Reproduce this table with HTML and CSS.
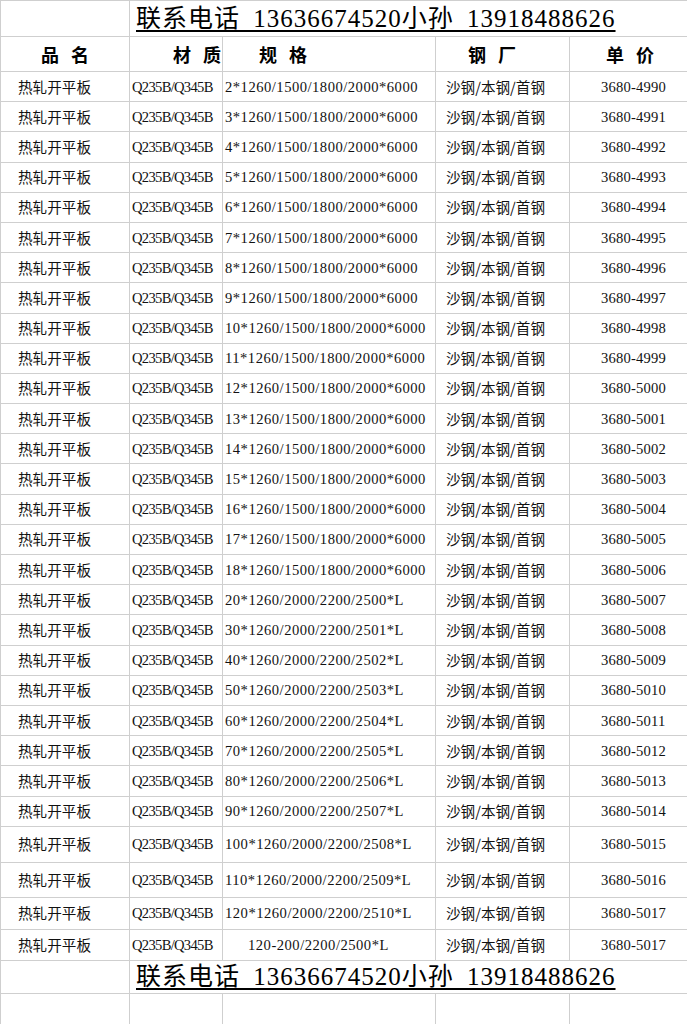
FILE: index.html
```html
<!DOCTYPE html>
<html lang="zh-CN">
<head>
<meta charset="utf-8">
<title>热轧开平板报价</title>
<link rel="stylesheet" href="styles.css">
</head>
<body>
<table class="sheet">
  <colgroup>
    <col class="c-name"><col class="c-mat"><col class="c-spec"><col class="c-mill"><col class="c-price">
  </colgroup>
  <tr class="r-title">
    <td></td>
    <td colspan="4" class="title"><span class="tt">联系电话 13636674520小孙 13918488626</span></td>
  </tr>
  <tr class="r-head">
    <th class="h-name">品 名</th>
    <th class="h-mat">材 质</th>
    <th class="h-spec">规 格</th>
    <th class="h-mill">钢 厂</th>
    <th class="h-price">单 价</th>
  </tr>
  <tr><td class="name">热轧开平板</td><td class="mat">Q235B/Q345B</td><td class="spec">2*1260/1500/1800/2000*6000</td><td class="mill">沙钢/本钢/首钢</td><td class="price">3680-4990</td></tr>
  <tr><td class="name">热轧开平板</td><td class="mat">Q235B/Q345B</td><td class="spec">3*1260/1500/1800/2000*6000</td><td class="mill">沙钢/本钢/首钢</td><td class="price">3680-4991</td></tr>
  <tr><td class="name">热轧开平板</td><td class="mat">Q235B/Q345B</td><td class="spec">4*1260/1500/1800/2000*6000</td><td class="mill">沙钢/本钢/首钢</td><td class="price">3680-4992</td></tr>
  <tr><td class="name">热轧开平板</td><td class="mat">Q235B/Q345B</td><td class="spec">5*1260/1500/1800/2000*6000</td><td class="mill">沙钢/本钢/首钢</td><td class="price">3680-4993</td></tr>
  <tr><td class="name">热轧开平板</td><td class="mat">Q235B/Q345B</td><td class="spec">6*1260/1500/1800/2000*6000</td><td class="mill">沙钢/本钢/首钢</td><td class="price">3680-4994</td></tr>
  <tr><td class="name">热轧开平板</td><td class="mat">Q235B/Q345B</td><td class="spec">7*1260/1500/1800/2000*6000</td><td class="mill">沙钢/本钢/首钢</td><td class="price">3680-4995</td></tr>
  <tr><td class="name">热轧开平板</td><td class="mat">Q235B/Q345B</td><td class="spec">8*1260/1500/1800/2000*6000</td><td class="mill">沙钢/本钢/首钢</td><td class="price">3680-4996</td></tr>
  <tr><td class="name">热轧开平板</td><td class="mat">Q235B/Q345B</td><td class="spec">9*1260/1500/1800/2000*6000</td><td class="mill">沙钢/本钢/首钢</td><td class="price">3680-4997</td></tr>
  <tr><td class="name">热轧开平板</td><td class="mat">Q235B/Q345B</td><td class="spec">10*1260/1500/1800/2000*6000</td><td class="mill">沙钢/本钢/首钢</td><td class="price">3680-4998</td></tr>
  <tr><td class="name">热轧开平板</td><td class="mat">Q235B/Q345B</td><td class="spec">11*1260/1500/1800/2000*6000</td><td class="mill">沙钢/本钢/首钢</td><td class="price">3680-4999</td></tr>
  <tr><td class="name">热轧开平板</td><td class="mat">Q235B/Q345B</td><td class="spec">12*1260/1500/1800/2000*6000</td><td class="mill">沙钢/本钢/首钢</td><td class="price">3680-5000</td></tr>
  <tr><td class="name">热轧开平板</td><td class="mat">Q235B/Q345B</td><td class="spec">13*1260/1500/1800/2000*6000</td><td class="mill">沙钢/本钢/首钢</td><td class="price">3680-5001</td></tr>
  <tr><td class="name">热轧开平板</td><td class="mat">Q235B/Q345B</td><td class="spec">14*1260/1500/1800/2000*6000</td><td class="mill">沙钢/本钢/首钢</td><td class="price">3680-5002</td></tr>
  <tr><td class="name">热轧开平板</td><td class="mat">Q235B/Q345B</td><td class="spec">15*1260/1500/1800/2000*6000</td><td class="mill">沙钢/本钢/首钢</td><td class="price">3680-5003</td></tr>
  <tr><td class="name">热轧开平板</td><td class="mat">Q235B/Q345B</td><td class="spec">16*1260/1500/1800/2000*6000</td><td class="mill">沙钢/本钢/首钢</td><td class="price">3680-5004</td></tr>
  <tr><td class="name">热轧开平板</td><td class="mat">Q235B/Q345B</td><td class="spec">17*1260/1500/1800/2000*6000</td><td class="mill">沙钢/本钢/首钢</td><td class="price">3680-5005</td></tr>
  <tr><td class="name">热轧开平板</td><td class="mat">Q235B/Q345B</td><td class="spec">18*1260/1500/1800/2000*6000</td><td class="mill">沙钢/本钢/首钢</td><td class="price">3680-5006</td></tr>
  <tr><td class="name">热轧开平板</td><td class="mat">Q235B/Q345B</td><td class="spec">20*1260/2000/2200/2500*L</td><td class="mill">沙钢/本钢/首钢</td><td class="price">3680-5007</td></tr>
  <tr><td class="name">热轧开平板</td><td class="mat">Q235B/Q345B</td><td class="spec">30*1260/2000/2200/2501*L</td><td class="mill">沙钢/本钢/首钢</td><td class="price">3680-5008</td></tr>
  <tr><td class="name">热轧开平板</td><td class="mat">Q235B/Q345B</td><td class="spec">40*1260/2000/2200/2502*L</td><td class="mill">沙钢/本钢/首钢</td><td class="price">3680-5009</td></tr>
  <tr><td class="name">热轧开平板</td><td class="mat">Q235B/Q345B</td><td class="spec">50*1260/2000/2200/2503*L</td><td class="mill">沙钢/本钢/首钢</td><td class="price">3680-5010</td></tr>
  <tr><td class="name">热轧开平板</td><td class="mat">Q235B/Q345B</td><td class="spec">60*1260/2000/2200/2504*L</td><td class="mill">沙钢/本钢/首钢</td><td class="price">3680-5011</td></tr>
  <tr><td class="name">热轧开平板</td><td class="mat">Q235B/Q345B</td><td class="spec">70*1260/2000/2200/2505*L</td><td class="mill">沙钢/本钢/首钢</td><td class="price">3680-5012</td></tr>
  <tr><td class="name">热轧开平板</td><td class="mat">Q235B/Q345B</td><td class="spec">80*1260/2000/2200/2506*L</td><td class="mill">沙钢/本钢/首钢</td><td class="price">3680-5013</td></tr>
  <tr><td class="name">热轧开平板</td><td class="mat">Q235B/Q345B</td><td class="spec">90*1260/2000/2200/2507*L</td><td class="mill">沙钢/本钢/首钢</td><td class="price">3680-5014</td></tr>
  <tr class="r-36"><td class="name">热轧开平板</td><td class="mat">Q235B/Q345B</td><td class="spec">100*1260/2000/2200/2508*L</td><td class="mill">沙钢/本钢/首钢</td><td class="price">3680-5015</td></tr>
  <tr class="r-35"><td class="name">热轧开平板</td><td class="mat">Q235B/Q345B</td><td class="spec">110*1260/2000/2200/2509*L</td><td class="mill">沙钢/本钢/首钢</td><td class="price">3680-5016</td></tr>
  <tr class="r-32"><td class="name">热轧开平板</td><td class="mat">Q235B/Q345B</td><td class="spec">120*1260/2000/2200/2510*L</td><td class="mill">沙钢/本钢/首钢</td><td class="price">3680-5017</td></tr>
  <tr class="r-31"><td class="name">热轧开平板</td><td class="mat">Q235B/Q345B</td><td class="spec spec-indent">120-200/2200/2500*L</td><td class="mill">沙钢/本钢/首钢</td><td class="price">3680-5017</td></tr>
  <tr class="r-title r-32">
    <td></td>
    <td colspan="4" class="title"><span class="tt">联系电话 13636674520小孙 13918488626</span></td>
  </tr>
  <tr class="r-32"><td></td><td></td><td></td><td></td><td></td></tr>
</table>
</body>
</html>
```

FILE: styles.css
```css
html, body {
  margin: 0;
  padding: 0;
  background: #ffffff;
}

.sheet {
  border-collapse: collapse;
  table-layout: fixed;
  width: 687px;
  font-family: "Liberation Serif", "Noto Sans CJK SC", serif;
  font-size: 14.6px;
  color: #111111;
}

.c-name { width: 129px; }
.c-mat { width: 93px; }
.c-spec { width: 213px; }
.c-mill { width: 134px; }
.c-price { width: 118px; }

.sheet td,
.sheet th {
  border: 1px solid #cfcfcf;
  padding: 0;
  height: 29.2px;
  line-height: 16px;
  white-space: nowrap;
  overflow: hidden;
  vertical-align: middle;
  text-align: left;
}

.sheet .r-title td { height: 34px; }
.sheet .r-head th { height: 34px; }
.sheet .r-36 td { height: 35px; }
.sheet .r-35 td { height: 34px; }
.sheet .r-32 td { height: 31px; }
.sheet .r-31 td { height: 30px; }

.sheet .title {
  padding-left: 6px;
  padding-top: 1px;
  font-family: "Liberation Serif", "Noto Sans CJK SC", serif;
  font-size: 25px;
  line-height: 26px;
  color: #000000;
  letter-spacing: 1px;
  word-spacing: 6px;
}

.tt {
  text-decoration: underline;
  text-decoration-thickness: 1.5px;
  text-underline-offset: 3px;
}

.sheet th {
  font-family: "Noto Sans CJK SC", sans-serif;
  font-weight: 700;
  font-size: 18px;
  word-spacing: 8px;
  color: #000000;
}

.sheet .h-name { text-align: center; }
.sheet .h-mat { text-align: right; padding-right: 1px; }
.sheet .h-spec { padding-left: 36px; }
.sheet .h-mill { padding-left: 32px; }
.sheet .h-price { padding-left: 36px; }

.sheet .name {
  padding-left: 17px;
  font-family: "Noto Sans CJK SC", sans-serif;
  font-size: 14.6px;
}

.sheet .mat {
  padding-left: 2px;
  letter-spacing: -0.7px;
}

.sheet .spec {
  padding-left: 2px;
  letter-spacing: 0.5px;
}

.sheet .spec-indent { padding-left: 25px; }

.sheet .mill {
  padding-left: 10px;
  font-family: "Noto Sans CJK SC", sans-serif;
}

.sheet .price {
  padding-left: 31px;
  letter-spacing: 0.2px;
}
```
